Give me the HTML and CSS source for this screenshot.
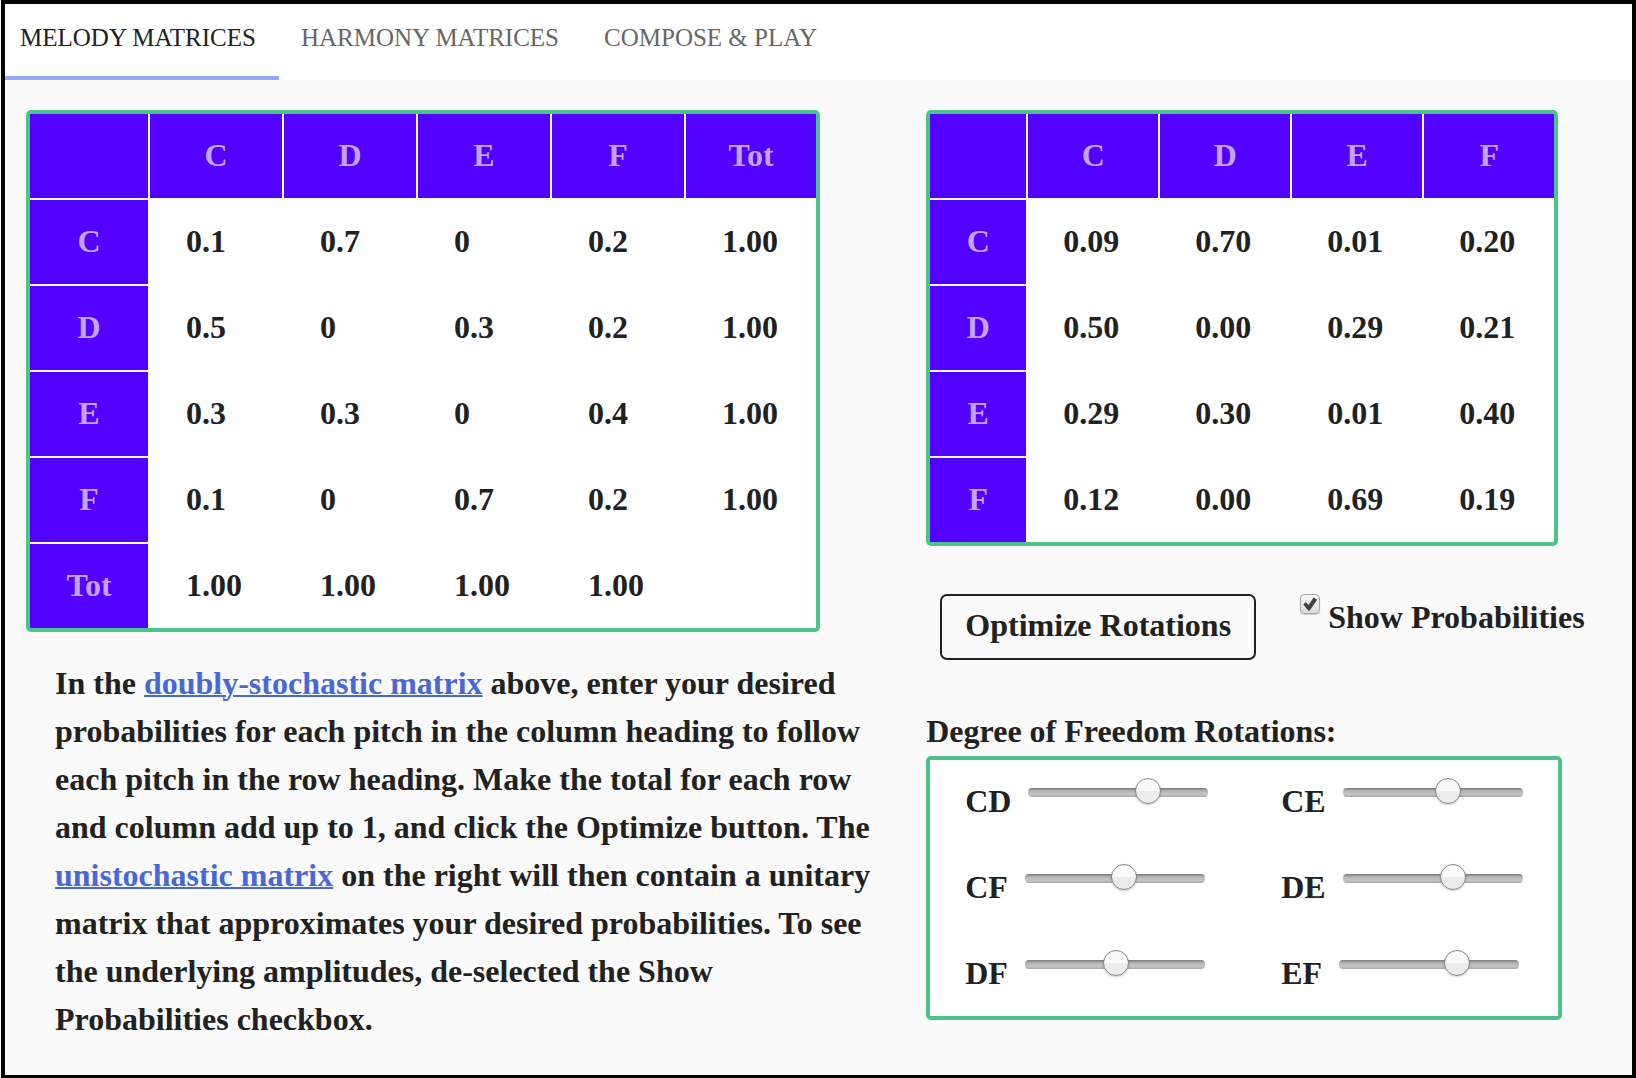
FILE: index.html
```html
<!DOCTYPE html>
<html lang="en">
<head>
<meta charset="utf-8">
<title>Melody Matrices</title>
<link rel="stylesheet" href="styles.css">
</head>
<body>
<div class="frame">
  <nav class="tabs">
    <a class="tab tab-active" href="#melody">MELODY MATRICES</a>
    <a class="tab" href="#harmony">HARMONY MATRICES</a>
    <a class="tab" href="#compose">COMPOSE &amp; PLAY</a>
  </nav>
  <main class="content">
    <section class="desired">
      <div class="panel">
        <table class="matrix matrix-desired">
          <thead>
            <tr><th class="corner"></th><th>C</th><th>D</th><th>E</th><th>F</th><th class="total">Tot</th></tr>
          </thead>
          <tbody>
            <tr><th>C</th><td><input aria-label="C to C" value="0.1"></td><td><input aria-label="C to D" value="0.7"></td><td><input aria-label="C to E" value="0"></td><td><input aria-label="C to F" value="0.2"></td><td>1.00</td></tr>
            <tr><th>D</th><td><input aria-label="D to C" value="0.5"></td><td><input aria-label="D to D" value="0"></td><td><input aria-label="D to E" value="0.3"></td><td><input aria-label="D to F" value="0.2"></td><td>1.00</td></tr>
            <tr><th>E</th><td><input aria-label="E to C" value="0.3"></td><td><input aria-label="E to D" value="0.3"></td><td><input aria-label="E to E" value="0"></td><td><input aria-label="E to F" value="0.4"></td><td>1.00</td></tr>
            <tr><th>F</th><td><input aria-label="F to C" value="0.1"></td><td><input aria-label="F to D" value="0"></td><td><input aria-label="F to E" value="0.7"></td><td><input aria-label="F to F" value="0.2"></td><td>1.00</td></tr>
            <tr><th>Tot</th><td>1.00</td><td>1.00</td><td>1.00</td><td>1.00</td><td></td></tr>
          </tbody>
        </table>
      </div>
      <p class="help">In the <a href="#doubly-stochastic">doubly-stochastic matrix</a> above, enter your desired probabilities for each pitch in the column heading to follow each pitch in the row heading. Make the total for each row and column add up to 1, and click the Optimize button. The <a href="#unistochastic">unistochastic matrix</a> on the right will then contain a unitary matrix that approximates your desired probabilities. To see the underlying amplitudes, de-selected the Show Probabilities checkbox.</p>
    </section>
    <section class="result">
      <div class="panel">
        <table class="matrix matrix-result">
          <thead>
            <tr><th class="corner"></th><th>C</th><th>D</th><th>E</th><th>F</th></tr>
          </thead>
          <tbody>
            <tr><th>C</th><td>0.09</td><td>0.70</td><td>0.01</td><td>0.20</td></tr>
            <tr><th>D</th><td>0.50</td><td>0.00</td><td>0.29</td><td>0.21</td></tr>
            <tr><th>E</th><td>0.29</td><td>0.30</td><td>0.01</td><td>0.40</td></tr>
            <tr><th>F</th><td>0.12</td><td>0.00</td><td>0.69</td><td>0.19</td></tr>
          </tbody>
        </table>
      </div>
      <div class="actions">
        <button class="optimize" type="button">Optimize Rotations</button>
        <div class="toggle">
          <input class="check" type="checkbox" id="show" checked>
          <label for="show">Show Probabilities</label>
        </div>
      </div>
      <h2 class="heading">Degree of Freedom Rotations:</h2>
      <div class="panel sliders">
        <div class="rotation"><label for="cd">CD</label><input class="slider" type="range" id="cd" value="69"></div>
        <div class="rotation"><label for="ce">CE</label><input class="slider" type="range" id="ce" value="60"></div>
        <div class="rotation"><label for="cf">CF</label><input class="slider" type="range" id="cf" value="56"></div>
        <div class="rotation"><label for="de">DE</label><input class="slider" type="range" id="de" value="63"></div>
        <div class="rotation"><label for="df">DF</label><input class="slider" type="range" id="df" value="51"></div>
        <div class="rotation"><label for="ef">EF</label><input class="slider" type="range" id="ef" value="68"></div>
      </div>
    </section>
  </main>
</div>
</body>
</html>
```
FILE: styles.css
```css
* {
  box-sizing: border-box;
}

body {
  margin: 0;
  background: #fafafa;
  color: #212121;
  font: bold 32px/48px "Liberation Serif", "Times New Roman", serif;
}

.frame {
  min-height: 100vh;
  margin-left: 1px;
  border: 4px solid #000;
  border-bottom-width: 3px;
}

.tabs {
  display: flex;
  overflow: hidden;
  background: #fff;
}

.tab {
  height: 76px;
  padding: 10px 23px 0 22px;
  border-bottom: 4px solid transparent;
  color: #666;
  font-size: 25px;
  font-weight: normal;
  text-decoration: none;
  white-space: nowrap;
}

.tab-active {
  padding-left: 15px;
  border-color: #93a7ff;
  color: #212121;
}

.content {
  display: grid;
  grid-template-columns: 54% 1fr;
  column-gap: 33px;
  padding: 30px 0 20px 21px;
}

.panel {
  width: fit-content;
  border: 4px solid #4cc38a;
  border-radius: 5px;
  background: #fff;
}

.matrix {
  border-collapse: separate;
  border-spacing: 0;
  table-layout: fixed;
}

.matrix-desired {
  width: 786px;
}

.matrix-result {
  width: 624px;
}

.matrix th {
  height: 86px;
  padding: 0 0 2px;
  border-top: 2px solid #fff;
  background: #5200ff;
  color: #c4a3ff;
}

.matrix thead th {
  height: 84px;
  border-top: 0;
  border-left: 2px solid #fff;
}

.matrix thead .corner {
  width: 118px;
  border-left: 0;
}

.matrix-result thead .corner {
  width: 96px;
}

.matrix thead .total {
  width: 132px;
}

.matrix td {
  padding: 0 0 0 38px;
}

.matrix-result td {
  padding-left: 37px;
}

.matrix input {
  display: block;
  width: 80px;
  height: 48px;
  padding: 0;
  border: 0;
  background: none;
  color: inherit;
  font: inherit;
}

.help {
  margin: 27px 0 0;
  padding: 0 8px 0 29px;
}

.help a {
  color: #4868d8;
  text-decoration-thickness: 2px;
}

.actions {
  display: flex;
  gap: 44px;
  padding: 48px 0 48px 14px;
}

.optimize {
  width: 316px;
  height: 66px;
  padding: 0 0 4px;
  border: 2px solid #212121;
  border-radius: 7px;
  background: none;
  color: inherit;
  font: inherit;
  white-space: nowrap;
}

.toggle {
  display: flex;
  gap: 8px;
  line-height: 46px;
  white-space: nowrap;
}

.check {
  appearance: none;
  flex: none;
  width: 20px;
  height: 20px;
  margin: 0;
  border: 1px solid #a6a6a6;
  border-radius: 4px;
  background: linear-gradient(#f6f6f6, #dcdcdc);
  box-shadow: 0 1px 1px #ccc;
}

.check:checked::before {
  content: "";
  display: block;
  width: 14px;
  height: 14px;
  margin: 2px;
  background: #404040;
  clip-path: polygon(0 54%, 18% 38%, 38% 58%, 74% 4%, 100% 20%, 46% 96%, 36% 96%);
}

.heading {
  margin: 0;
  padding-bottom: 2px;
  font-size: 32px;
  line-height: 46px;
}

.sliders {
  display: grid;
  grid-template-columns: 316px 312px;
}

.rotation {
  display: flex;
  gap: 17px;
  height: 86px;
  padding: 18px 0 0 35px;
  line-height: 46px;
}

.rotation:nth-last-child(-n+2) {
  height: 84px;
}

.slider {
  appearance: none;
  width: 180px;
  height: 28px;
  margin: 0;
  background: none;
}

.slider::-webkit-slider-runnable-track {
  height: 9px;
  border-radius: 4px;
  background: linear-gradient(#767676, #b2b2b2 30%, #c6c6c6 70%, #a8a8a8);
}

.slider::-webkit-slider-thumb {
  appearance: none;
  width: 26px;
  height: 26px;
  margin-top: -10px;
  border: 1px solid #858585;
  border-radius: 50%;
  background: linear-gradient(#fafafa 50%, #ececec 50%);
  box-shadow: 0 1px 2px #0003;
}
```
